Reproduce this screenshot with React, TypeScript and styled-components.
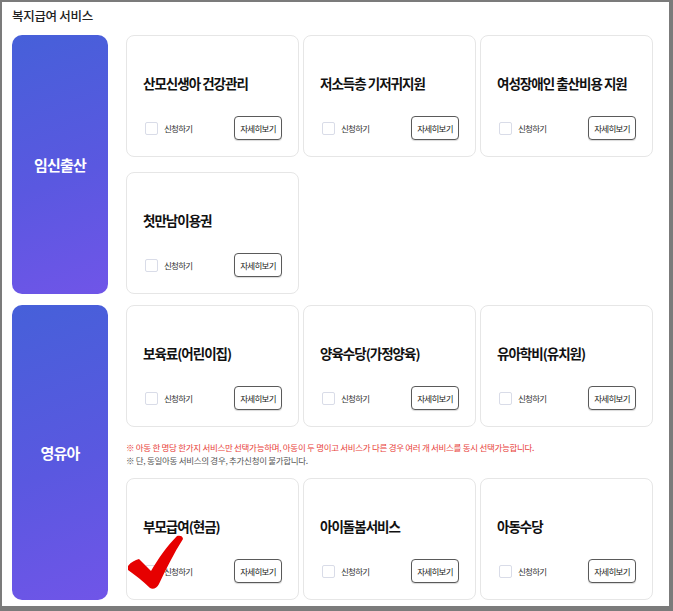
import React from "react";
import styled, { createGlobalStyle } from "styled-components";

const GlobalStyle = createGlobalStyle`
  body {
    margin: 0;
    background: #fff;
    font-family: "Noto Sans CJK KR", "Noto Sans", sans-serif;
  }
`;

type Service = { title: string; checked?: boolean };

const birthServices: Service[] = [
  { title: "산모신생아 건강관리" },
  { title: "저소득층 기저귀지원" },
  { title: "여성장애인 출산비용 지원" },
  { title: "첫만남이용권" },
];

const infantTop: Service[] = [
  { title: "보육료(어린이집)" },
  { title: "양육수당(가정양육)" },
  { title: "유아학비(유치원)" },
];

const infantBottom: Service[] = [
  { title: "부모급여(현금)", checked: true },
  { title: "아이돌봄서비스" },
  { title: "아동수당" },
];

// 빨간 체크 표시 (선택된 카드 위에 덮어 그림)
const RedCheck = () => (
  <CheckMark viewBox="0 0 58 58" width="58" height="58">
    <path
      d="M2 32 C5 28 9 26 13 25 C17 29 21 33 25 37 C32 25 41 12 51 2 C54 1 57 2 57 5 C48 19 40 35 33 50 C31 54 27 56 24 54 C17 47 9 41 2 36 Z"
      fill="#e60000"
    />
  </CheckMark>
);

const ServiceCard = ({ title, checked }: Service) => (
  <Card>
    <CardTitle>{title}</CardTitle>
    <CardBottom>
      <ApplyLabel>
        <Box />
        신청하기
      </ApplyLabel>
      <DetailButton>자세히보기</DetailButton>
    </CardBottom>
    {checked && <RedCheck />}
  </Card>
);

export default function App() {
  return (
    <>
      <GlobalStyle />
      <Frame>
        <Title>복지급여 서비스</Title>
        <Sections>
          <Section>
            <Category>임신출산</Category>
            <CardGrid>
              {birthServices.map((s) => (
                <ServiceCard key={s.title} {...s} />
              ))}
            </CardGrid>
          </Section>
          <Section>
            <Category>영유아</Category>
            <Column>
              <CardGrid>
                {infantTop.map((s) => (
                  <ServiceCard key={s.title} {...s} />
                ))}
              </CardGrid>
              <Notes>
                <Note $red>
                  ※ 아동 한 명당 한가지 서비스만 선택가능하며, 아동이 두 명이고
                  서비스가 다른 경우 여러 개 서비스를 동시 선택가능합니다.
                </Note>
                <Note>※ 단, 동일아동 서비스의 경우, 추가신청이 불가합니다.</Note>
              </Notes>
              <CardGrid>
                {infantBottom.map((s) => (
                  <ServiceCard key={s.title} {...s} />
                ))}
              </CardGrid>
            </Column>
          </Section>
        </Sections>
      </Frame>
    </>
  );
}

const Frame = styled.div`
  width: 673px;
  height: 611px;
  box-sizing: border-box;
  border: 2px solid #7b7b7b;
  border-right-width: 4px;
  border-bottom-width: 5px;
  padding-left: 10px;
  display: flex;
  flex-direction: column;
  background: #fff;
`;

const Title = styled.div`
  padding-top: 6px;
  margin-bottom: 11px;
  height: 16px;
  line-height: 16px;
  font-size: 12.5px;
  font-weight: 500;
  letter-spacing: -0.3px;
  color: #222;
`;

const Sections = styled.div`
  display: flex;
  flex-direction: column;
  gap: 11px;
`;

const Section = styled.div`
  display: flex;
  gap: 18px;
`;

const Category = styled.div`
  width: 96px;
  flex-shrink: 0;
  border-radius: 10px;
  background: linear-gradient(160deg, #4660d9 0%, #5a58e0 55%, #7055e8 100%);
  display: flex;
  align-items: center;
  justify-content: center;
  color: #fff;
  font-size: 15px;
  font-weight: 700;
  letter-spacing: -0.8px;
`;

const Column = styled.div`
  display: flex;
  flex-direction: column;
`;

const CardGrid = styled.div`
  display: grid;
  grid-template-columns: repeat(3, 173px);
  column-gap: 4px;
  row-gap: 15px;
`;

const Card = styled.div`
  position: relative;
  height: 122px;
  box-sizing: border-box;
  border: 1px solid #e6e6e6;
  border-radius: 8px;
  background: #fff;
  padding: 38px 16px 16px 16px;
  display: flex;
  flex-direction: column;
`;

const CardTitle = styled.div`
  font-size: 13.5px;
  line-height: 18px;
  font-weight: 700;
  letter-spacing: -1px;
  color: #111;
`;

const CardBottom = styled.div`
  margin-top: auto;
  display: flex;
  align-items: center;
  justify-content: space-between;
`;

const ApplyLabel = styled.label`
  display: flex;
  align-items: center;
  gap: 6px;
  padding-left: 2px;
  font-size: 8.5px;
  letter-spacing: -0.7px;
  color: #333;
`;

const Box = styled.span`
  width: 11px;
  height: 11px;
  border: 1px solid #d9dce8;
  border-radius: 2px;
  background: #fff;
`;

const DetailButton = styled.button`
  width: 48px;
  height: 24px;
  padding: 0;
  border: 1px solid #5a5a5a;
  border-radius: 4px;
  background: #fff;
  font-family: inherit;
  font-size: 8.5px;
  letter-spacing: -0.7px;
  color: #222;
  box-shadow: 0 1px 1px rgba(0, 0, 0, 0.15);
`;

const Notes = styled.div`
  margin: 14px 0 11px;
  display: flex;
  flex-direction: column;
`;

const Note = styled.div<{ $red?: boolean }>`
  font-size: 8.5px;
  line-height: 13px;
  letter-spacing: -0.3px;
  color: ${({ $red }) => ($red ? "#e8413a" : "#555")};
  white-space: nowrap;
`;

const CheckMark = styled.svg`
  position: absolute;
  left: -1px;
  top: 55px;
`;
